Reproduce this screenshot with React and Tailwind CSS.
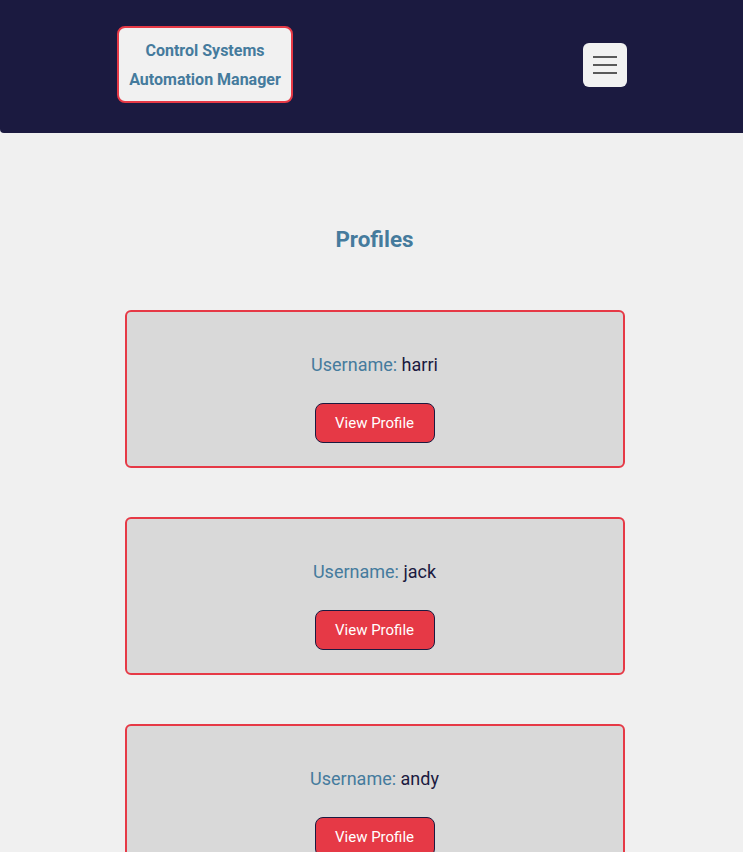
import React from "react";

const users = ["harri", "jack", "andy"];

export default function App() {
  return (
    <div className="min-h-[852px] bg-[#f0f0f0] font-['Roboto',sans-serif]">
      <header className="h-[133px] bg-[#1b1a40] rounded-bl-[4px] flex items-center justify-between pl-[117px] pr-[116px] pb-[4px]">
        <div className="w-[176px] h-[77px] border-2 border-[#e63946] rounded-[8px] bg-[#f1f1f1] flex flex-col items-center justify-center text-[#457b9d] font-bold text-[16px] leading-[29px]">
          <span>Control Systems</span>
          <span>Automation Manager</span>
        </div>
        <button className="w-[44px] h-[44px] bg-[#f1f1f1] rounded-[6px] flex flex-col items-center justify-center gap-[6px]">
          <span className="block w-[24px] h-[2px] bg-[#595959]"></span>
          <span className="block w-[24px] h-[2px] bg-[#595959]"></span>
          <span className="block w-[24px] h-[2px] bg-[#595959]"></span>
        </button>
      </header>
      <main className="flex flex-col items-center pt-[91px] pl-[6px]">
        <h1 className="text-[22.4px] font-bold text-[#457b9d] leading-[30px]">Profiles</h1>
        <div className="flex flex-col gap-[49px] mt-[56px] pb-[20px]">
          {users.map((u) => (
            <div
              key={u}
              className="w-[500px] h-[158px] border-2 border-[#e63946] rounded-[6px] bg-[#d9d9d9] flex flex-col items-center pt-[39px]"
            >
              <p className="text-[18px] leading-[27px]">
                <span className="text-[#457b9d]">Username: </span>
                <span className="text-[#1b1a40]">{u}</span>
              </p>
              <button className="mt-[25px] w-[120px] h-[40px] bg-[#e63946] border border-[#1b1a40] rounded-[8px] text-white text-[15px]">
                View Profile
              </button>
            </div>
          ))}
        </div>
      </main>
    </div>
  );
}
